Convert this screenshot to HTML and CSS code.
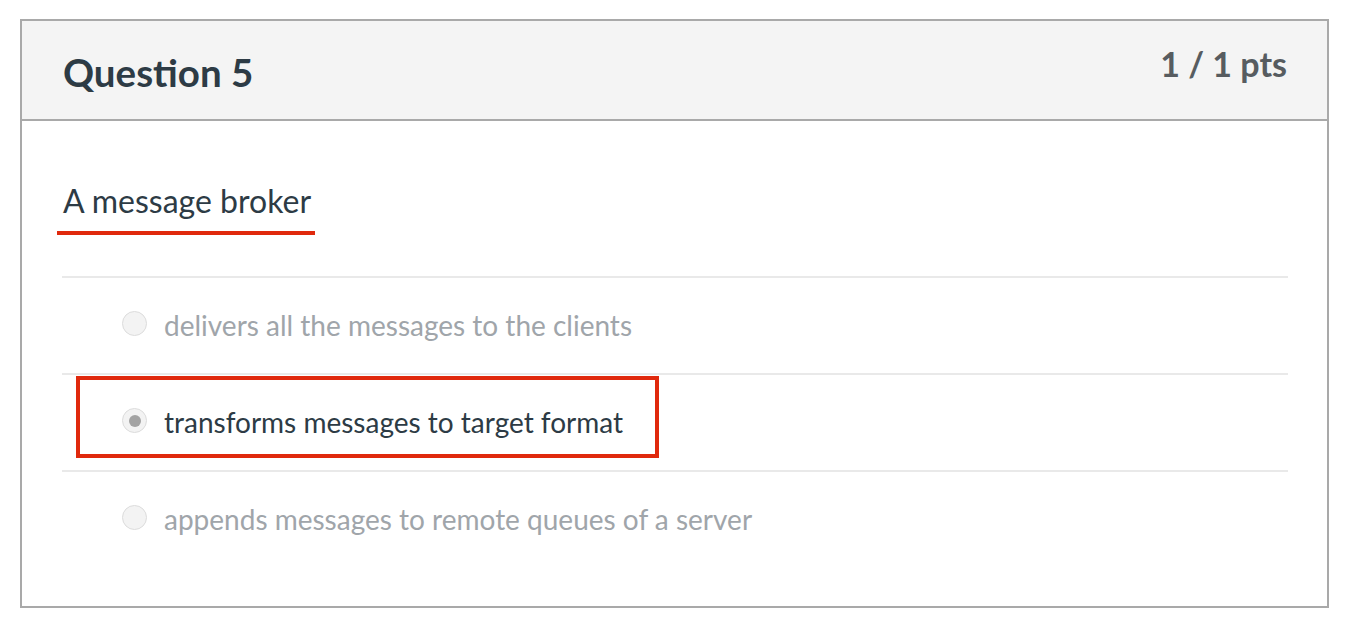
FILE: index.html
```html
<!DOCTYPE html>
<html>
<head>
<meta charset="utf-8">
<link rel="stylesheet" href="styles.css">
</head>
<body>
<div class="card">
  <div class="card-header">
    <h2 class="q-title">Question 5</h2>
    <div class="q-pts">1 / 1 pts</div>
  </div>
  <div class="card-body">
    <div class="q-text"><span class="q-mark">A message broker</span></div>
    <div class="answers">
      <div class="answer muted">
        <span class="radio"></span>
        <span class="a-text">delivers all the messages to the clients</span>
      </div>
      <div class="answer selected">
        <span class="highlight"></span>
        <span class="radio checked"></span>
        <span class="a-text">transforms messages to target format</span>
      </div>
      <div class="answer muted last">
        <span class="radio"></span>
        <span class="a-text">appends messages to remote queues of a server</span>
      </div>
    </div>
  </div>
</div>
</body>
</html>
```
FILE: styles.css
```css
html, body {
  margin: 0;
  padding: 0;
  background: #ffffff;
}
body {
  font-family: Lato, "Open Sans", "Liberation Sans", sans-serif;
  color: #2d3b45;
  padding: 19px 0 0 20px;
}
.card {
  width: 1305px;
  border: 2px solid #a9a9a9;
  background: #fff;
}
.card-header {
  background: #f4f4f4;
  border-bottom: 2px solid #a9a9a9;
  height: 98px;
  display: flex;
  justify-content: space-between;
  align-items: flex-start;
  padding: 0 40px 0 41px;
}
.q-title {
  margin: 0;
  font-size: 38.5px;
  font-weight: 700;
  line-height: 46px;
  padding-top: 28px;
  color: #2d3b45;
}
.q-pts {
  font-size: 34px;
  font-weight: 700;
  color: #575c60;
  line-height: 40px;
  padding-top: 23px;
}
.card-body {
  padding: 0 39px 39px 40px;
}
.q-text {
  padding-top: 62px;
  font-size: 32px;
  line-height: 36px;
}
.q-mark {
  display: inline-block;
  margin-left: -5px;
  padding: 0 4px 12px 6px;
  border-bottom: 4px solid #e0290d;
  line-height: 36px;
  vertical-align: top;
}
.answers {
  margin-top: 41px;
  border-top: 2px solid #e9e9e9;
}
.answer {
  position: relative;
  display: flex;
  align-items: flex-start;
  height: 65px;
  padding: 30px 0 0 60px;
  border-bottom: 2px solid #e9e9e9;
  font-size: 28px;
  line-height: 34px;
}
.answer.last {
  border-bottom: none;
}
.answer.muted {
  color: #a0a5aa;
}
.radio {
  width: 23px;
  height: 23px;
  margin-top: 3px;
  border-radius: 50%;
  border: 1px solid #dcdcdc;
  background: #f3f3f3;
  margin-right: 17px;
  position: relative;
  flex: none;
}
.radio.checked::after {
  content: "";
  position: absolute;
  left: 5.5px;
  top: 5.5px;
  width: 12px;
  height: 12px;
  border-radius: 50%;
  background: #a3a3a3;
}
.highlight {
  position: absolute;
  left: 14px;
  top: 1px;
  width: 575px;
  height: 74px;
  border: 4px solid #e0290d;
}
```
